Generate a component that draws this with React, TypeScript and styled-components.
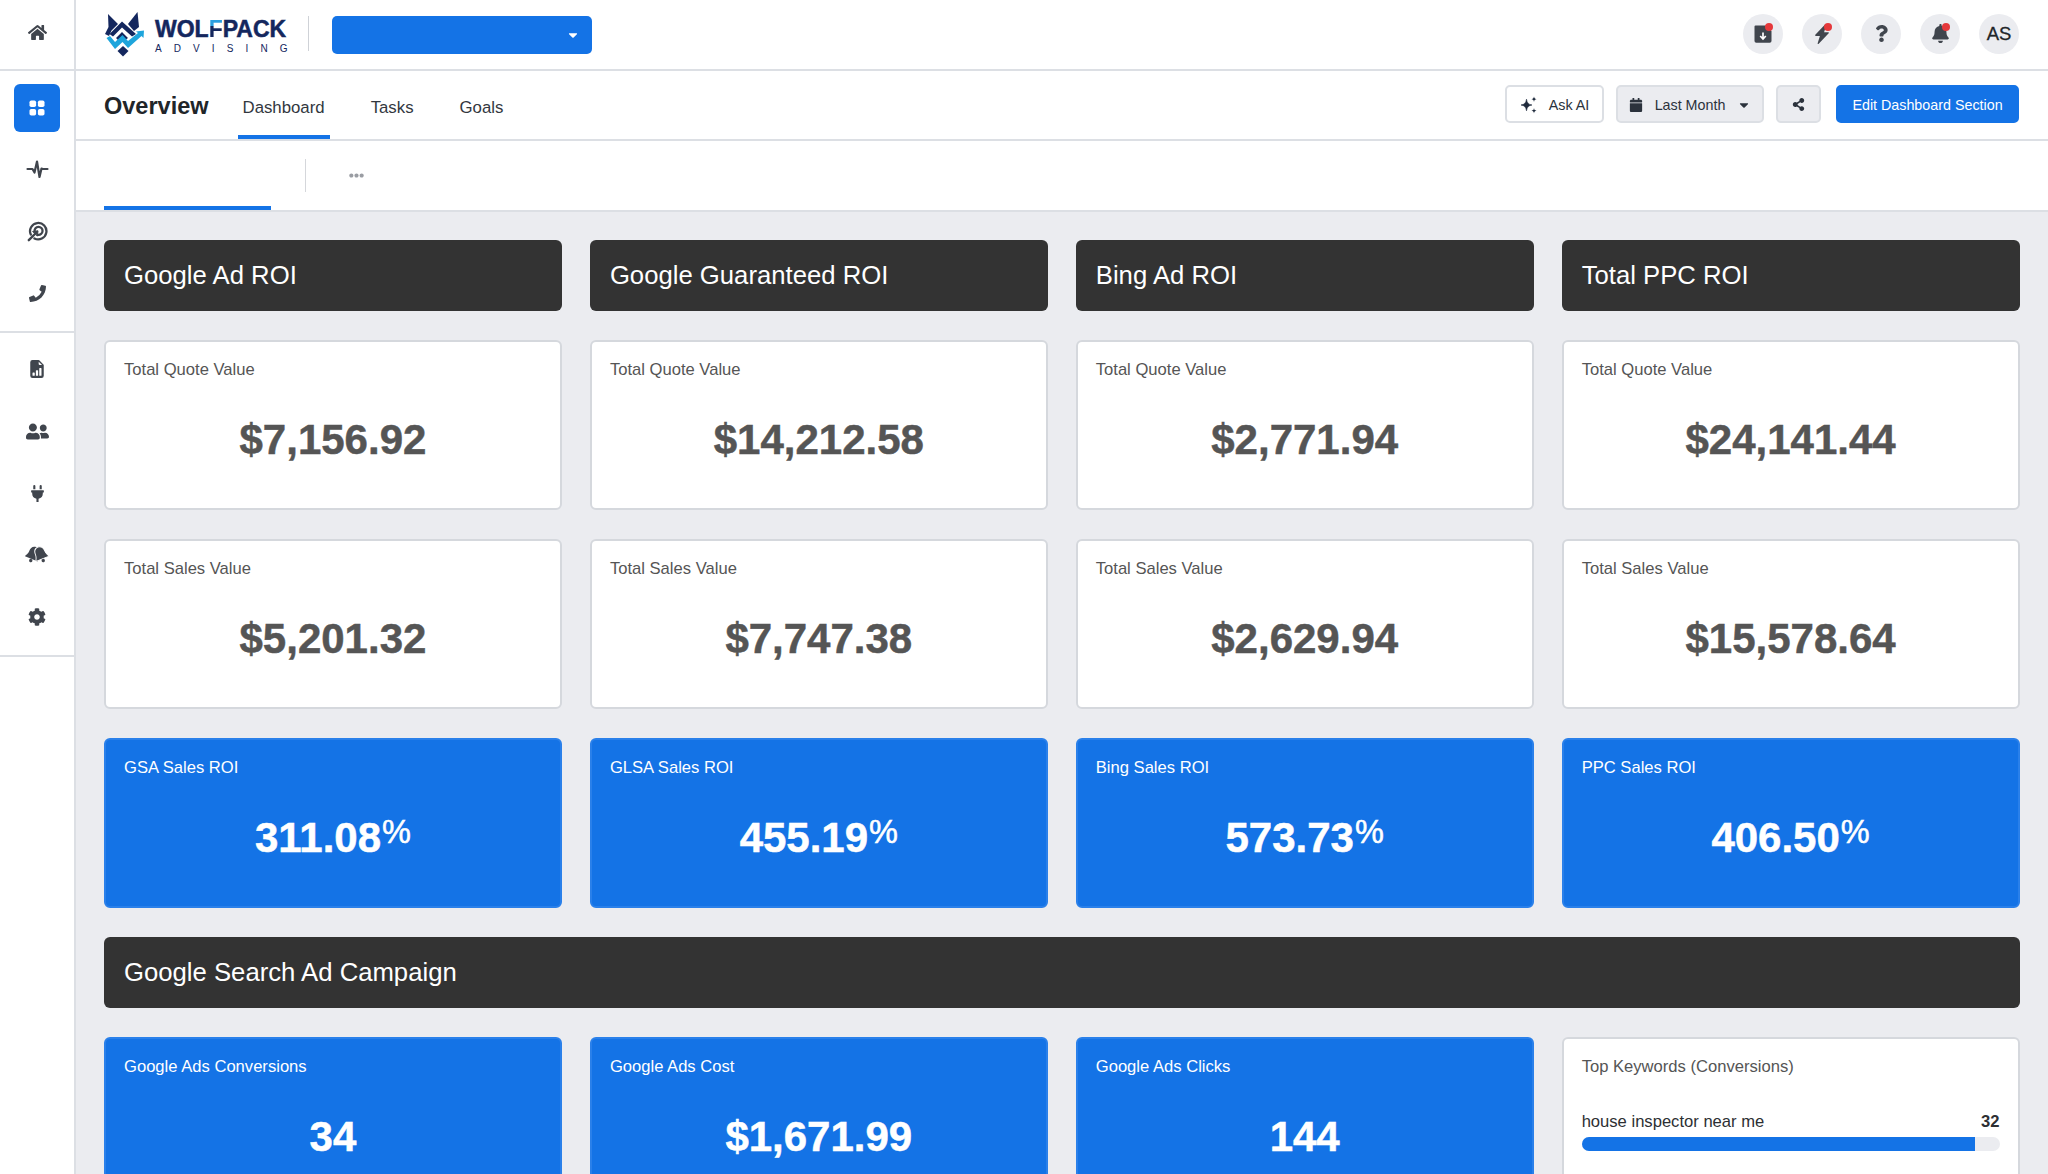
import React from "react";
import styled, { createGlobalStyle } from "styled-components";
import {
  FaHome, FaPlug, FaUserFriends, FaCog, FaPhoneAlt, FaQuestion, FaBell, FaCaretDown,
  FaCalendar, FaShareAlt, FaEllipsisH,
} from "react-icons/fa";
import { BsFileEarmarkBarGraphFill, BsLightningChargeFill } from "react-icons/bs";

const Global = createGlobalStyle`
  html, body { margin: 0; padding: 0; height: 100%; overflow: hidden; background: #ebecf0; }
  * { box-sizing: border-box; }
  body { font-family: "Liberation Sans", Arial, sans-serif; color: #212529; }
`;

const BLUE = "#1473e6";
const LINE = "#dcdfe4";
const ICON = "#40454d";

const Shell = styled.div`
  display: flex;
  width: 2048px;
  height: 1174px;
  overflow: hidden;
`;
const Sidebar = styled.aside`
  width: 76px;
  flex: none;
  background: #fff;
  border-right: 2px solid ${LINE};
  display: flex;
  flex-direction: column;
`;
const SideHome = styled.div`
  height: 71px;
  flex: none;
  display: flex;
  align-items: center;
  justify-content: center;
  padding-bottom: 4px;
  border-bottom: 2px solid ${LINE};
  color: ${ICON};
  font-size: 19px;
`;
const SideGroup = styled.div`
  display: flex;
  flex-direction: column;
  gap: 14px;
  padding: 13px 14px 13px;
  border-bottom: 2px solid ${LINE};
`;
const SideItem = styled.div<{ $active?: boolean }>`
  width: 46px;
  height: 48px;
  border-radius: 6px;
  display: flex;
  align-items: center;
  justify-content: center;
  padding-bottom: ${(p) => (p.$active ? 0 : 2)}px;
  font-size: 19px;
  color: ${(p) => (p.$active ? "#fff" : ICON)};
  background: ${(p) => (p.$active ? BLUE : "transparent")};
`;
const FlippedPhone = styled(FaPhoneAlt)`
  transform: scaleX(-1);
`;
const Main = styled.main`
  flex: 1;
  min-width: 0;
  display: flex;
  flex-direction: column;
`;
const TopBar = styled.header`
  height: 71px;
  flex: none;
  background: #fff;
  border-bottom: 2px solid ${LINE};
  display: flex;
  align-items: center;
  padding: 0 29px 2px 28px;
`;
const LogoWrap = styled.div`
  display: flex;
  align-items: center;
  gap: 5px;
  width: 204px;
  flex: none;
`;
const WordMark = styled.div`
  display: flex;
  flex-direction: column;
  margin-top: 7px;
  color: #14275e;
`;
const WordTop = styled.span`
  font-size: 23px;
  font-weight: 700;
  line-height: 17px;
  white-space: nowrap;
  -webkit-text-stroke: 0.5px #14275e;
`;
const WordF = styled.span`
  background: linear-gradient(#2b9fe0 0 38%, #14275e 38% 100%);
  -webkit-background-clip: text;
  background-clip: text;
  color: transparent;
  -webkit-text-stroke: 0;
`;
const WordBottom = styled.span`
  font-size: 10px;
  line-height: 9px;
  margin-top: 6px;
  letter-spacing: 12.1px;
  white-space: nowrap;
`;
const VSep = styled.div`
  width: 1px;
  height: 35px;
  background: #cfd2d7;
  flex: none;
`;
const ClientSelect = styled.div`
  width: 260px;
  height: 38px;
  margin: 3px 0 0 23px;
  background: ${BLUE};
  border-radius: 5px;
  color: #fff;
  font-size: 14px;
  display: flex;
  align-items: center;
  justify-content: flex-end;
  padding-right: 12px;
`;
const TopIcons = styled.div`
  margin-left: auto;
  display: flex;
  gap: 19px;
`;
const Circle = styled.div`
  position: relative;
  width: 40px;
  height: 40px;
  border-radius: 50%;
  background: #ebecf0;
  color: ${ICON};
  display: flex;
  align-items: center;
  justify-content: center;
  font-size: 18px;
`;
const Avatar = styled(Circle)`
  font-size: 18.5px;
  color: #212529;
  padding-top: 1px;
  -webkit-text-stroke: 0.3px #212529;
`;
const Dot = styled.span`
  position: absolute;
  left: 22px;
  top: 9px;
  width: 8px;
  height: 8px;
  border-radius: 50%;
  background: #e5383b;
`;
const NavBar = styled.nav`
  height: 70px;
  flex: none;
  background: #fff;
  border-bottom: 2px solid ${LINE};
  display: flex;
  align-items: stretch;
  padding: 0 29px 0 28px;
`;
const PageTitle = styled.h1`
  margin: 0 29px 0 0;
  font-size: 23.5px;
  font-weight: 700;
  align-self: center;
  line-height: 1;
  padding-top: 3px;
`;
const NavTabs = styled.div`
  display: flex;
  gap: 36px;
`;
const NavTab = styled.div<{ $active?: boolean }>`
  padding: 10px 5px 0;
  font-size: 16.8px;
  color: #32373e;
  display: flex;
  align-items: center;
  border-bottom: 4px solid ${(p) => (p.$active ? BLUE : "transparent")};
`;
const NavActions = styled.div`
  margin-left: auto;
  display: flex;
  align-items: flex-start;
  padding-top: 14px;
`;
const Btn = styled.div<{ $kind: "white" | "grey" | "blue"; $ml: number; $w: number }>`
  width: ${(p) => p.$w}px;
  height: 38px;
  margin-left: ${(p) => p.$ml}px;
  padding-top: 1px;
  border-radius: 5px;
  border: 2px solid ${(p) => (p.$kind === "blue" ? BLUE : LINE)};
  background: ${(p) => (p.$kind === "white" ? "#fff" : p.$kind === "grey" ? "#ebecf0" : BLUE)};
  color: ${(p) => (p.$kind === "blue" ? "#fff" : "#2b323c")};
  font-size: 14.3px;
  display: flex;
  align-items: center;
  justify-content: center;
  gap: 12px;
  white-space: nowrap;
`;
const SubBar = styled.div`
  height: 71px;
  flex: none;
  background: #fff;
  border-bottom: 2px solid ${LINE};
  display: flex;
  align-items: stretch;
  padding-left: 28px;
`;
const SubTab = styled.div`
  width: 167px;
  border-bottom: 4px solid ${BLUE};
`;
const SubSep = styled.div`
  width: 1px;
  height: 33px;
  background: #d5d7db;
  margin: 18px 0 0 34px;
`;
const SubMore = styled.div`
  margin: 27px 0 0 43px;
  color: #9a9da3;
  font-size: 15px;
  line-height: 1;
`;
const Content = styled.section`
  flex: 1;
  padding: 28px 28.5px 0 28px;
  display: grid;
  grid-template-columns: repeat(4, 1fr);
  grid-auto-rows: max-content;
  column-gap: 28px;
  row-gap: 29px;
`;
const Banner = styled.div<{ $wide?: boolean }>`
  height: 71px;
  grid-column: ${(p) => (p.$wide ? "1 / -1" : "auto")};
  background: #333;
  color: #fff;
  border-radius: 6px;
  font-size: 25.7px;
  display: flex;
  align-items: center;
  padding-left: 20px;
`;
const Card = styled.div<{ $blue?: boolean }>`
  height: 170px;
  border-radius: 6px;
  border: 2px solid ${(p) => (p.$blue ? "#2a80ea" : "#d5d8dd")};
  background: ${(p) => (p.$blue ? BLUE : "#fff")};
  color: ${(p) => (p.$blue ? "#fff" : "#555")};
  padding: 18px 18px;
`;
const CardLabel = styled.div`
  font-size: 16.6px;
  line-height: 20px;
`;
const CardValue = styled.div`
  margin-top: 35px;
  font-size: 42px;
  line-height: 50px;
  font-weight: 700;
  text-align: center;
  white-space: nowrap;
  -webkit-text-stroke: 0.5px currentColor;
`;
const Percent = styled.span`
  font-size: 32.5px;
  font-weight: 400;
  line-height: 0;
  margin-left: 1px;
  vertical-align: 9px;
`;
const KeywordRow = styled.div`
  margin-top: 35px;
  display: flex;
  justify-content: space-between;
  font-size: 16.6px;
  line-height: 20px;
  color: #2d2f33;
`;
const KeywordCount = styled.span`
  font-weight: 700;
`;
const Track = styled.div`
  margin-top: 5px;
  height: 14px;
  border-radius: 7px;
  background: #ebecf0;
  overflow: hidden;
`;
const Fill = styled.div`
  height: 100%;
  background: ${BLUE};
`;

const GridIcon = () => (
  <svg width="16" height="16" viewBox="0 0 16 16" fill="#fff">
    <rect x="0.5" y="0.5" width="6.6" height="6.6" rx="1.8" />
    <rect x="8.9" y="0.5" width="6.6" height="6.6" rx="1.8" />
    <rect x="0.5" y="8.9" width="6.6" height="6.6" rx="1.8" />
    <rect x="8.9" y="8.9" width="6.6" height="6.6" rx="1.8" />
  </svg>
);
const PulseIcon = () => (
  <svg width="23" height="22" viewBox="0 0 23 22" fill="none" stroke={ICON} strokeWidth="2.2" strokeLinejoin="round" strokeLinecap="round">
    <path d="M1.5 11H6.5L8.5 14.5L11 3.5L13.5 19L15.5 10.5L16.5 11H21.5" />
  </svg>
);
const TargetIcon = () => (
  <svg width="21" height="21" viewBox="0 0 21 21" fill="none" stroke={ICON} strokeLinecap="round">
    <path d="M3.8 13.6A8.2 8.2 0 1 1 7.4 17.4" strokeWidth="2.3" />
    <path d="M7.6 10.4A4 4 0 1 1 11 13.8" strokeWidth="2.3" />
    <path d="M1.8 19.2L9 12" strokeWidth="2.4" />
    <path d="M6 10.4L11 9.8L10.4 14.8Z" fill={ICON} strokeWidth="1" strokeLinejoin="round" />
  </svg>
);
const BellsIcon = () => {
  const bell = "M0 -8.5C-3.6 -8.5 -5 -5.6 -5 -2.4C-5 1.4 -7 2.6 -7 4.2H7C7 2.6 5 1.4 5 -2.4C5 -5.6 3.6 -8.5 0 -8.5Z";
  return (
    <svg width="24" height="20" viewBox="0 0 24 20" fill={ICON}>
      <g transform="translate(8 10) rotate(22)">
        <path d={bell} />
        <circle cx="0" cy="6" r="1.7" />
      </g>
      <g transform="translate(16 10) rotate(-22)">
        <path d={bell} stroke="#fff" strokeWidth="0.9" />
        <circle cx="0" cy="6" r="1.7" />
      </g>
    </svg>
  );
};
const DownloadFileIcon = () => (
  <svg width="20" height="20" viewBox="0 0 20 20">
    <path d="M2.6 1.5H13L18.5 7V17A1.8 1.8 0 0 1 16.7 18.8H3.3A1.8 1.8 0 0 1 1.5 17V2.6A1.1 1.1 0 0 1 2.6 1.5Z" fill={ICON} />
    <path d="M10 8.5V14.5M7.2 12L10 15L12.8 12" fill="none" stroke="#fff" strokeWidth="1.7" />
  </svg>
);
const SparkleIcon = () => (
  <svg width="17" height="18" viewBox="0 0 17 18" fill="#1f2a3c">
    <path d="M6.5 3.2C7.2 7 8.2 8.3 12 9C8.2 9.7 7.2 11 6.5 14.8C5.8 11 4.8 9.7 1 9C4.8 8.3 5.8 7 6.5 3.2Z" stroke="#1f2a3c" strokeWidth="0.6" />
    <path d="M14 0.5C14.3 2.3 14.8 2.8 16.5 3.2C14.8 3.6 14.3 4.1 14 5.9C13.7 4.1 13.2 3.6 11.5 3.2C13.2 2.8 13.7 2.3 14 0.5Z" />
    <path d="M14 12.1C14.3 13.9 14.8 14.4 16.5 14.8C14.8 15.2 14.3 15.7 14 17.5C13.7 15.7 13.2 15.2 11.5 14.8C13.2 14.4 13.7 13.9 14 12.1Z" />
  </svg>
);
const LogoMark = () => (
  <svg width="46" height="46" viewBox="4 4 46 46">
    <path d="M8 7L18 17L11.5 23.5L9 29L5 27L8.5 20Z" fill="#14275e" />
    <path d="M37.5 5L39 20L34 24L28 17Z" fill="#14275e" />
    <path d="M22 14.5L36 27L32 29.5L22 20.5L13 29.5L9.5 27Z" fill="#14275e" />
    <path d="M16 31L22 25L28 31L24.5 33.5L22 31L19 34Z" fill="#14275e" />
    <path d="M6.5 31L10 29L15 35L22.5 28L28 34L38 26L36 24.5L44 23.5L43.5 31L41.5 29L28 41L22.5 35L15 42Z" fill="#1ea5dc" />
    <path d="M23 39L28.5 44L23 49.5L17.5 44Z" fill="#14275e" />
  </svg>
);

type CardData = { label: string; value: string; pct?: boolean };

const banners = ["Google Ad ROI", "Google Guaranteed ROI", "Bing Ad ROI", "Total PPC ROI"];
const quotes = ["$7,156.92", "$14,212.58", "$2,771.94", "$24,141.44"];
const sales = ["$5,201.32", "$7,747.38", "$2,629.94", "$15,578.64"];
const rois: CardData[] = [
  { label: "GSA Sales ROI", value: "311.08", pct: true },
  { label: "GLSA Sales ROI", value: "455.19", pct: true },
  { label: "Bing Sales ROI", value: "573.73", pct: true },
  { label: "PPC Sales ROI", value: "406.50", pct: true },
];
const ads: CardData[] = [
  { label: "Google Ads Conversions", value: "34" },
  { label: "Google Ads Cost", value: "$1,671.99" },
  { label: "Google Ads Clicks", value: "144" },
];

const Stat = ({ label, value, pct, blue }: CardData & { blue?: boolean }) => (
  <Card $blue={blue}>
    <CardLabel>{label}</CardLabel>
    <CardValue>
      {value}
      {pct && <Percent>%</Percent>}
    </CardValue>
  </Card>
);

export default function App() {
  return (
    <Shell>
      <Global />
      <Sidebar>
        <SideHome><FaHome /></SideHome>
        <SideGroup>
          <SideItem $active><GridIcon /></SideItem>
          <SideItem><PulseIcon /></SideItem>
          <SideItem><TargetIcon /></SideItem>
          <SideItem><FlippedPhone size={17} /></SideItem>
        </SideGroup>
        <SideGroup>
          <SideItem><BsFileEarmarkBarGraphFill size={18} /></SideItem>
          <SideItem><FaUserFriends size={23} /></SideItem>
          <SideItem><FaPlug size={17} /></SideItem>
          <SideItem><BellsIcon /></SideItem>
          <SideItem><FaCog size={18} /></SideItem>
        </SideGroup>
      </Sidebar>
      <Main>
        <TopBar>
          <LogoWrap>
            <LogoMark />
            <WordMark>
              <WordTop>WOL<WordF>F</WordF>PACK</WordTop>
              <WordBottom>ADVISING</WordBottom>
            </WordMark>
          </LogoWrap>
          <VSep />
          <ClientSelect><FaCaretDown /></ClientSelect>
          <TopIcons>
            <Circle><DownloadFileIcon /><Dot /></Circle>
            <Circle><BsLightningChargeFill size={20} /><Dot /></Circle>
            <Circle><FaQuestion size={17} /></Circle>
            <Circle><FaBell size={19} /><Dot /></Circle>
            <Avatar>AS</Avatar>
          </TopIcons>
        </TopBar>
        <NavBar>
          <PageTitle>Overview</PageTitle>
          <NavTabs>
            <NavTab $active>Dashboard</NavTab>
            <NavTab>Tasks</NavTab>
            <NavTab>Goals</NavTab>
          </NavTabs>
          <NavActions>
            <Btn $kind="white" $ml={0} $w={99}><SparkleIcon />Ask AI</Btn>
            <Btn $kind="grey" $ml={12} $w={148}><FaCalendar size={14} />Last Month<FaCaretDown size={14} /></Btn>
            <Btn $kind="grey" $ml={12} $w={45}><FaShareAlt size={13} /></Btn>
            <Btn $kind="blue" $ml={15} $w={183}>Edit Dashboard Section</Btn>
          </NavActions>
        </NavBar>
        <SubBar>
          <SubTab />
          <SubSep />
          <SubMore><FaEllipsisH /></SubMore>
        </SubBar>
        <Content>
          {banners.map((b) => <Banner key={b}>{b}</Banner>)}
          {quotes.map((v) => <Stat key={v} label="Total Quote Value" value={v} />)}
          {sales.map((v) => <Stat key={v} label="Total Sales Value" value={v} />)}
          {rois.map((c) => <Stat key={c.label} {...c} blue />)}
          <Banner $wide>Google Search Ad Campaign</Banner>
          {ads.map((c) => <Stat key={c.label} {...c} blue />)}
          <Card>
            <CardLabel>Top Keywords (Conversions)</CardLabel>
            <KeywordRow>
              <span>house inspector near me</span>
              <KeywordCount>32</KeywordCount>
            </KeywordRow>
            <Track><Fill style={{ width: `${(32 / 33.95) * 100}%` }} /></Track>
          </Card>
        </Content>
      </Main>
    </Shell>
  );
}
